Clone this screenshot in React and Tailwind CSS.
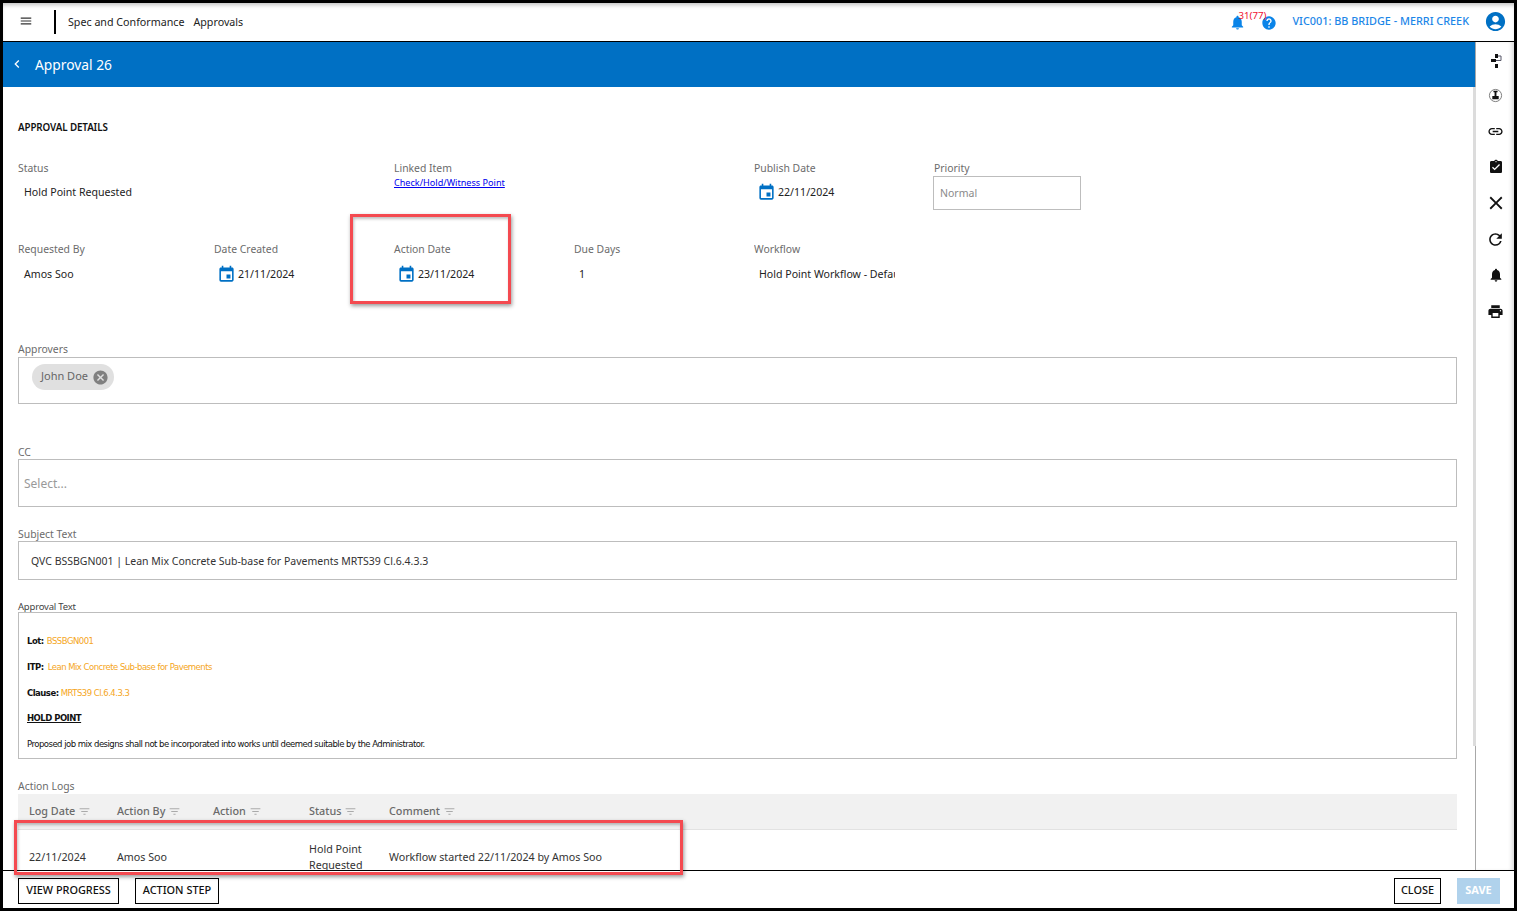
import React from "react";
import {
  MdMenu, MdChevronLeft, MdNotifications, MdHelp, MdAccountCircle, MdLink, MdAssignmentTurnedIn,
  MdClose, MdRefresh, MdPrint, MdEvent, MdCancel, MdFilterList,
} from "react-icons/md";

function Label({ children, className = "" }) {
  return <div className={`text-[10.4px] leading-[14px] text-[#6b6b6b] ${className}`}>{children}</div>;
}

function DateValue({ value, className = "mt-[9px]" }) {
  return (
    <div className={`flex h-[16px] items-center pl-[3px] text-[10.6px] text-[#222] ${className}`}>
      <MdEvent className="mr-[2px] h-[19px] w-[19px] text-[#0070c4]" />
      <span className="mt-[2px]">{value}</span>
    </div>
  );
}

function TextValue({ value, className = "mt-[9px] pl-[6px]" }) {
  return <div className={`flex h-[16px] items-center pt-[2px] text-[10.6px] text-[#222] ${className}`}>{value}</div>;
}

function Head({ children, className }) {
  return (
    <div className={`flex items-center gap-[3px] text-[10.8px] font-medium text-[#6a6a6a] ${className}`}>
      {children}
      <MdFilterList className="h-[13px] w-[13px] text-[#aaa]" />
    </div>
  );
}

function Hub() {
  return (
    <svg viewBox="0 0 16 16" className="h-[16px] w-[16px]">
      <path d="M7 1h3v4H7zM3 6h5v3H3zM7 11h3v4H7z" fill="#111" />
      <path d="M10 3h3v4.500h-5" fill="none" stroke="#556" strokeWidth="1" />
    </svg>
  );
}

function Stamp() {
  return (
    <svg viewBox="0 0 16 16" className="h-[15px] w-[15px]">
      <circle cx="8" cy="8" r="6.500" fill="none" stroke="#777" strokeWidth="1" />
      <path d="M5.800 2.800h4.400v1.600H9v4h2.400V12H4.600V8.400H7v-4H5.800z" fill="#111" />
    </svg>
  );
}

export default function App() {
  const railBtn = "flex h-[36px] w-full shrink-0 items-center justify-center text-[#111]";
  return (
    <div className="relative flex h-[911px] w-[1517px] flex-col overflow-hidden border-x-[3px] border-b-[3px] border-t-[3px] border-black bg-white font-['Noto_Sans','Open_Sans',sans-serif]">
      {/* Top bar */}
      <header className="flex h-[38px] shrink-0 items-center bg-white shadow-[inset_0_4px_4px_-2px_rgba(0,0,0,0.25)]">
        <MdMenu className="mb-[2px] ml-[16px] h-[14px] w-[14px] text-[#333]" />
        <div className="ml-[21px] h-[24px] w-[2px] bg-black" />
        <span className="ml-[12px] text-[10.7px] text-[#222]">Spec and Conformance</span>
        <span className="ml-[9px] text-[10.7px] text-[#222]">Approvals</span>
        <div className="relative ml-auto flex items-center">
          <MdNotifications className="h-[17px] w-[17px] text-[#0a84e8]" />
          <span className="absolute left-[9px] top-[-5px] text-[9.700px] leading-[14px] text-[#f01030]">31(77)</span>
          <MdHelp className="ml-[15px] mt-[1px] h-[16px] w-[16px] text-[#0a84e8]" />
        </div>
        <span className="mb-[2px] ml-[15px] text-[10.850px] font-medium text-[#1b86e8]">VIC001: BB BRIDGE - MERRI CREEK</span>
        <MdAccountCircle className="mb-[2px] ml-[15px] mr-[7px] h-[23px] w-[23px] text-[#0070c4]" />
      </header>
      <div className="h-[1px] shrink-0 bg-black" />

      <div className="flex min-h-0 flex-1">
        {/* Main */}
        <div className="flex min-w-0 flex-1 flex-col">
          <div className="flex h-[45px] shrink-0 items-center bg-[#0070c4] text-white">
            <MdChevronLeft className="ml-[6px] mb-[1px] h-[16px] w-[16px]" />
            <span className="ml-[10px] mt-[2px] text-[13.800px]">Approval 26</span>
          </div>

          <div className="min-h-0 flex-1 overflow-hidden pl-[15px] pr-[18px]">
            <div className="mt-[35px] text-[9.800px] font-semibold uppercase leading-[12px] tracking-[-0.1px] text-[#111]">Approval Details</div>

            <div className="mt-[27px] grid grid-cols-[376px_360px_180px_1fr]">
              <div>
                <Label>Status</Label>
                <TextValue value="Hold Point Requested" />
              </div>
              <div>
                <Label>Linked Item</Label>
                <a className="mt-[1px] block text-[9.100px] leading-[13px] text-[#0000ee] underline">Check/Hold/Witness Point</a>
              </div>
              <div>
                <Label>Publish Date</Label>
                <DateValue value="22/11/2024" />
              </div>
              <div>
                <Label>Priority</Label>
                <div className="-ml-[1px] mt-[1px] flex h-[34px] w-[148px] items-center border border-[#bdbdbd] pl-[6px] pt-[2px] text-[10.5px] text-[#8a8a8a]">Normal</div>
              </div>
            </div>

            <div className="mt-[32px] grid grid-cols-[196px_180px_180px_180px_141px]">
              <div>
                <Label>Requested By</Label>
                <TextValue value="Amos Soo" className="mt-[10px] pl-[6px]" />
              </div>
              <div>
                <Label>Date Created</Label>
                <DateValue value="21/11/2024" className="mt-[10px]" />
              </div>
              <div>
                <Label>Action Date</Label>
                <DateValue value="23/11/2024" className="mt-[10px]" />
              </div>
              <div>
                <Label>Due Days</Label>
                <TextValue value="1" className="mt-[10px] pl-[5px]" />
              </div>
              <div className="overflow-hidden">
                <Label>Workflow</Label>
                <TextValue value="Hold Point Workflow - Default" className="mt-[10px] whitespace-nowrap pl-[5px]" />
              </div>
            </div>

            <Label className="mt-[60px]">Approvers</Label>
            <div className="mt-[1px] flex h-[47px] items-start border border-[#bdbdbd] pl-[13px] pt-[6px]">
              <div className="flex h-[26px] items-center rounded-full bg-[#e0e0e0] pl-[9px] pr-[5px] text-[11px] text-[#666]">
                <span className="mb-[1px]">John Doe</span>
                <MdCancel className="ml-[4px] h-[17px] w-[17px] text-[#808080]" />
              </div>
            </div>

            <Label className="mt-[41px]">CC</Label>
            <div className="flex h-[48px] items-center border border-[#bdbdbd] pl-[5px] pt-[2px] text-[12px] text-[#999]">Select...</div>

            <Label className="mt-[20px]">Subject Text</Label>
            <div className="flex h-[39px] items-center border border-[#bdbdbd] pl-[12px] pt-[2px] text-[10.5px] text-[#333]">
              QVC BSSBGN001 | Lean Mix Concrete Sub-base for Pavements MRTS39 Cl.6.4.3.3
            </div>

            <div className="mt-[21px] text-[9.500px] leading-[11px] tracking-[-0.2px] text-[#444]">Approval Text</div>
            <div className="h-[147px] border border-[#bdbdbd] pl-[8px] pt-[22px] text-[8.500px] leading-[13px] tracking-[-0.52px] text-[#111] [font-family:'DejaVu_Sans',sans-serif]">
              <div className="h-[13px]"><b>Lot:</b> <span className="ml-[1px] text-[#f5a623]">BSSBGN001</span></div>
              <div className="mt-[13px] h-[13px]"><b>ITP:</b> <span className="ml-[2px] text-[#f5a623]">Lean Mix Concrete Sub-base for Pavements</span></div>
              <div className="mt-[13px] h-[13px]"><b>Clause:</b> <span className="text-[#f5a623]">MRTS39 Cl.6.4.3.3</span></div>
              <div className="mt-[12px] h-[13px]"><b className="underline">HOLD POINT</b></div>
              <div className="mt-[13px] h-[13px]">Proposed job mix designs shall not be incorporated into works until deemed suitable by the Administrator.</div>
            </div>

            <Label className="mt-[20px]">Action Logs</Label>
            <div className="mt-[1px] flex h-[36px] items-center border-b border-[#e2e2e2] bg-[#f1f1f1] pl-[11px]">
              <Head className="w-[88px]">Log Date</Head>
              <Head className="w-[96px]">Action By</Head>
              <Head className="w-[96px]">Action</Head>
              <Head className="w-[80px]">Status</Head>
              <Head className="w-[200px]">Comment</Head>
            </div>
            <div className="flex pl-[11px] pt-[11px] text-[10.7px] leading-[16px] text-[#333]">
              <div className="flex h-[32px] w-[88px] items-center">22/11/2024</div>
              <div className="flex h-[32px] w-[96px] items-center">Amos Soo</div>
              <div className="h-[32px] w-[96px]" />
              <div className="w-[80px]">Hold Point<br />Requested</div>
              <div className="flex h-[32px] items-center">Workflow started 22/11/2024 by Amos Soo</div>
            </div>
          </div>
        </div>

        {/* Right rail */}
        <aside className="flex w-[39px] shrink-0 flex-col items-center border-l border-[#a8a8a8] pl-[1px] pt-[3px] shadow-[inset_-4px_0_4px_-2px_rgba(0,0,0,0.16)]">
          <div className="flex h-[32px] w-full shrink-0 items-center justify-center text-[#111]"><Hub /></div>
          <div className={railBtn}><Stamp /></div>
          <div className={railBtn}><MdLink className="h-[17px] w-[17px]" /></div>
          <div className={railBtn}><MdAssignmentTurnedIn className="h-[16px] w-[16px]" /></div>
          <div className={railBtn}><MdClose className="h-[22px] w-[22px]" /></div>
          <div className={railBtn}><MdRefresh className="h-[19px] w-[19px]" /></div>
          <div className={railBtn}><MdNotifications className="h-[16px] w-[16px]" /></div>
          <div className={railBtn}><MdPrint className="h-[17px] w-[17px]" /></div>
        </aside>
      </div>

      {/* Footer */}
      <footer className="flex h-[38px] shrink-0 items-center border-t border-black bg-white pl-[15px] pr-[14px] pt-[2px]">
        <button className="h-[26px] w-[101px] border border-black text-[10.9px] font-medium text-[#111]">VIEW PROGRESS</button>
        <button className="ml-[16px] h-[26px] w-[84px] border border-black text-[10.9px] font-medium text-[#111]">ACTION STEP</button>
        <button className="ml-auto h-[26px] w-[47px] border border-black text-[10.9px] font-medium text-[#111]">CLOSE</button>
        <button className="ml-[16px] h-[26px] w-[43px] bg-[#b0d2ec] text-[11px] font-bold text-white">SAVE</button>
      </footer>

      {/* Scrollbar thumb */}
      <div className="absolute left-[1470px] top-[84px] h-[659px] w-[3px] bg-[#dcdcdc]" />

      {/* Annotation boxes */}
      <div className="absolute left-[347px] top-[211px] h-[90px] w-[161px] border-[3px] border-[#f44a50] shadow-[1px_2px_4px_rgba(0,0,0,0.4),inset_1px_2px_3px_rgba(0,0,0,0.25)]" />
      <div className="absolute left-[11px] top-[817px] h-[55px] w-[669px] border-[3px] border-[#f44a50] shadow-[1px_2px_4px_rgba(0,0,0,0.4),inset_1px_2px_3px_rgba(0,0,0,0.25)]" />
    </div>
  );
}
